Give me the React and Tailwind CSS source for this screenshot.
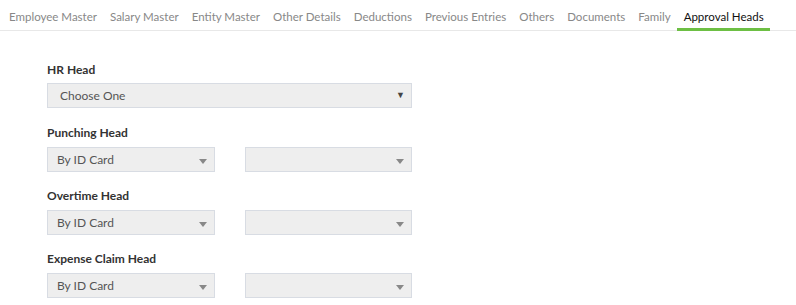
import React from 'react';

const tabs = [
  'Employee Master',
  'Salary Master',
  'Entity Master',
  'Other Details',
  'Deductions',
  'Previous Entries',
  'Others',
  'Documents',
  'Family',
  'Approval Heads',
];

function SmallSelect({ value }) {
  return (
    <div className="relative w-[168px] h-[25px] bg-[#eeeeee] border border-[#d8dce3] flex items-center pl-[9px] text-[12px] text-[#555]">
      <span>{value}</span>
      <span className="absolute right-[7px] top-[11px] w-0 h-0 border-x-[4px] border-x-transparent border-t-[5px] border-t-[#888]" />
    </div>
  );
}

function HeadRow({ label }) {
  return (
    <div className="flex flex-col">
      <label className="text-[12px] font-bold text-[#333] leading-[16px] mb-[6px]">{label}</label>
      <div className="flex gap-[30px]">
        <SmallSelect value="By ID Card" />
        <SmallSelect value="" />
      </div>
    </div>
  );
}

export default function App() {
  return (
    <div className="w-[796px] h-[305px] bg-white overflow-hidden" style={{ fontFamily: 'Lato, "Open Sans", sans-serif' }}>
      <div className="flex pl-[2.5px] border-b border-[#e8e8e8] h-[31px]">
        {tabs.map((t, i) => {
          const active = i === tabs.length - 1;
          return (
            <div
              key={t}
              className={
                active
                  ? 'shrink-0 whitespace-nowrap px-[6.5px] pt-[8px] text-[11.52px] text-[#111] border-b-[3px] border-[#6dbf44] h-[31px]'
                  : 'shrink-0 whitespace-nowrap px-[6.5px] pt-[8px] text-[11.52px] text-[#888] h-[31px]'
              }
            >
              {t}
            </div>
          );
        })}
      </div>

      <div className="pl-[47px] pt-[31px] w-[412px] flex flex-col">
        <div className="flex flex-col">
          <label className="text-[12px] font-bold text-[#333] leading-[16px] mb-[5px]">HR Head</label>
          <div className="relative h-[25px] w-[365px] bg-[#eeeeee] border border-[#d8dce3] flex items-center pl-[12px] text-[12px] text-[#555]">
            <span>Choose One</span>
            <span className="absolute right-[6px] top-[4px] text-[9px] text-[#444]">▼</span>
          </div>
        </div>
        <div className="flex flex-col gap-[16px] mt-[17px]">
          <HeadRow label="Punching Head" />
          <HeadRow label="Overtime Head" />
          <HeadRow label="Expense Claim Head" />
        </div>
      </div>
    </div>
  );
}
